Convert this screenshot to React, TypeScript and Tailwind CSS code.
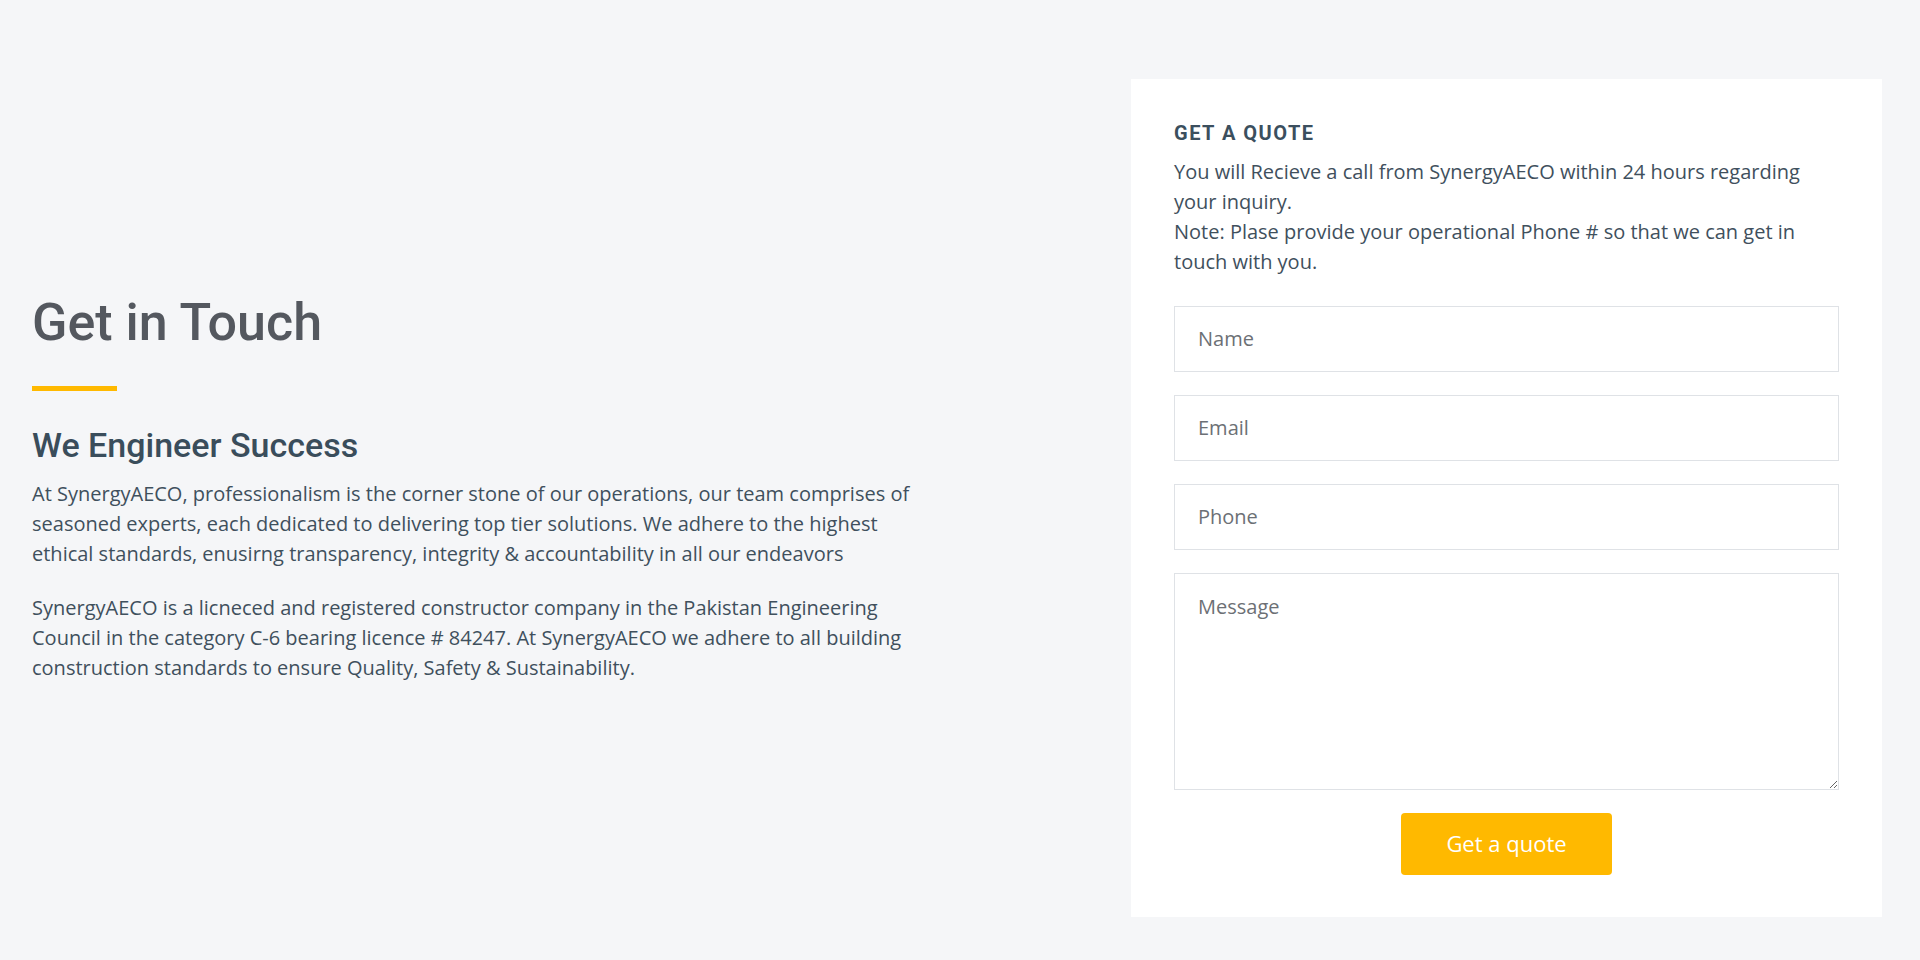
import React from "react";

export default function App() {
  const inputCls =
    "block w-full h-[66px] border border-[#dfe2e6] bg-white px-[23px] text-[20px] text-[#555] placeholder:text-[#6c7075] outline-none";
  return (
    <div
      className="w-full h-[960px] bg-[#f5f6f8] flex items-center pl-8 pr-[38px] pt-[78px] pb-[43px]"
      style={{ fontFamily: '"Open Sans", "Liberation Sans", sans-serif' }}
    >
      <div className="flex-1 self-center pt-1">
        <div className="max-w-[890px]">
          <h1
            className="text-[52px] leading-[60px] font-medium text-[#54585f]"
            style={{ fontFamily: 'Roboto, "Liberation Sans", sans-serif' }}
          >
            Get in Touch
          </h1>
          <div className="mt-[33px] h-[5px] w-[85px] bg-[#ffb900]" />
          <h2
            className="mt-[34px] text-[34px] leading-[40px] font-medium text-[#3a4d5b]"
            style={{ fontFamily: 'Roboto, "Liberation Sans", sans-serif' }}
          >
            We Engineer Success
          </h2>
          <p className="mt-[14px] mb-6 text-[20px] leading-[30px] text-[#3f505d]">
            At SynergyAECO, professionalism is the corner stone of our operations, our team comprises of
            seasoned experts, each dedicated to delivering top tier solutions. We adhere to the highest
            ethical standards, enusirng transparency, integrity &amp; accountability in all our endeavors
          </p>
          <p className="mb-6 text-[20px] leading-[30px] text-[#3f505d]">
            SynergyAECO is a licneced and registered constructor company in the Pakistan Engineering
            Council in the category C-6 bearing licence # 84247. At SynergyAECO we adhere to all building
            construction standards to ensure Quality, Safety &amp; Sustainability.
          </p>
        </div>
      </div>
      <div className="w-[751px] shrink-0 bg-white px-[43px] pt-[39px] pb-[42px]">
        <h3
          className="text-[20px] leading-[30px] font-bold tracking-[1.5px] text-[#3b4f5e]"
          style={{ fontFamily: 'Roboto, "Liberation Sans", sans-serif' }}
        >
          GET A QUOTE
        </h3>
        <p className="mt-[9px] text-[20px] leading-[30px] text-[#3f505d]">
          You will Recieve a call from SynergyAECO within 24 hours regarding your inquiry.
          <br />
          Note: Plase provide your operational Phone # so that we can get in touch with you.
        </p>
        <form className="mt-[29px] flex flex-col gap-[23px]" onSubmit={(e) => e.preventDefault()}>
          <input className={inputCls} placeholder="Name" />
          <input className={inputCls} placeholder="Email" />
          <input className={inputCls} placeholder="Phone" />
          <textarea
            className="block w-full h-[217px] border border-[#dfe2e6] bg-white px-[23px] py-[18px] text-[20px] leading-[30px] text-[#555] placeholder:text-[#6c7075] outline-none"
            placeholder="Message"
          />
          <div className="flex justify-center">
            <button
              type="submit"
              className="w-[211px] h-[62px] rounded-[4px] bg-[#ffb900] text-[22px] text-white"
            >
              Get a quote
            </button>
          </div>
        </form>
      </div>
    </div>
  );
}
